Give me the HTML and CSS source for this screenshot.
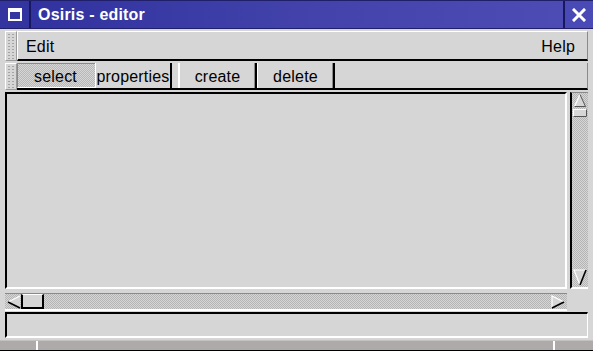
FILE: index.html
```html
<!DOCTYPE html>
<html>
<head>
<meta charset="utf-8">
<title>Osiris - editor</title>
<link rel="stylesheet" href="styles.css">
</head>
<body>
<div class="win">
  <div class="titlebar">
    <div class="tb-icon">
      <svg width="14" height="13" viewBox="0 0 14 13"><rect x="0" y="0" width="14" height="13" fill="#fff"/><rect x="2" y="4" width="10" height="7" fill="#3636a0"/></svg>
    </div>
    <div class="tb-title">Osiris - editor</div>
    <div class="tb-close">
      <svg width="14" height="14" viewBox="0 0 14 14"><path d="M2 2 L12 12 M12 2 L2 12" stroke="#fff" stroke-width="3" stroke-linecap="square"/></svg>
    </div>
  </div>

  <div class="barrow menurow">
    <div class="handle"></div>
    <div class="menubar">
      <span class="menu-item">Edit</span>
      <span class="spacer"></span>
      <span class="menu-item">Help</span>
    </div>
  </div>

  <div class="barrow toolrow">
    <div class="handle"></div>
    <div class="toolbar">
      <div class="tool btn-select">select</div>
      <div class="tool btn-props">properties</div>
      <div class="tool-gap"></div>
      <div class="tool btn-create">create</div>
      <div class="tool btn-delete">delete</div>
    </div>
  </div>

  <div class="scrollarea">
    <div class="canvas"></div>
    <div class="vscroll">
      <div class="arrow-up">
        <svg width="16" height="25" viewBox="0 0 16 25">
          <path d="M2 14 L8 1 L14 14 Z" fill="#d6d6d6"/>
          <path d="M2.5 13.5 L8 1.5" stroke="#fff" stroke-width="1.2" fill="none"/>
          <path d="M8 1.5 L13.5 13.5 L2.5 13.5" stroke="#555" stroke-width="1" fill="none"/>
          <rect x="1.5" y="16.5" width="13" height="7" fill="#d6d6d6" stroke="#fff" stroke-width="1"/>
          <path d="M14.5 16.5 L14.5 23.5 L1.5 23.5" stroke="#555" stroke-width="1" fill="none"/>
        </svg>
      </div>
      <div class="vtrack"></div>
      <div class="arrow-down">
        <svg width="16" height="17" viewBox="0 0 16 17">
          <path d="M2 1 L14 1 L8 16 Z" fill="#d6d6d6"/>
          <path d="M8 16 L2 1 L14 1" stroke="#fff" stroke-width="1.2" fill="none"/>
          <path d="M14 1 L8 16" stroke="#000" stroke-width="1.6" fill="none"/>
        </svg>
      </div>
    </div>
  </div>

  <div class="hscrollrow">
    <div class="hscroll">
      <div class="arrow-left">
        <svg width="14" height="14" viewBox="0 0 14 14">
          <path d="M1 7 L13 1 L13 13 Z" fill="#d6d6d6"/>
          <path d="M1 7 L13 1" stroke="#fff" stroke-width="1.2" fill="none"/>
          <path d="M1 7 L13 13" stroke="#000" stroke-width="1.6" fill="none"/>
        </svg>
      </div>
      <div class="hslider"></div>
      <div class="htrack"></div>
      <div class="arrow-right">
        <svg width="14" height="14" viewBox="0 0 14 14">
          <path d="M1 1 L13 7 L1 13 Z" fill="#d6d6d6"/>
          <path d="M1 13 L1 1 L13 7" stroke="#fff" stroke-width="1.2" fill="none"/>
          <path d="M13 7 L1 13" stroke="#000" stroke-width="1.6" fill="none"/>
        </svg>
      </div>
    </div>
  </div>

  <div class="statusrow">
    <div class="status"></div>
  </div>

  <div class="bottomstrip">
    <div class="seg seg-a"></div>
    <div class="seg seg-b"></div>
    <div class="seg seg-c"></div>
  </div>
</div>
</body>
</html>
```

FILE: styles.css
```css
* { box-sizing: border-box; }
html, body { margin: 0; padding: 0; }
body {
  width: 593px;
  height: 351px;
  overflow: hidden;
  background: #d6d6d6;
  font-family: "Liberation Sans", Arial, sans-serif;
  color: #000;
}
.win {
  display: flex;
  flex-direction: column;
  height: 351px;
}

/* title bar */
.titlebar {
  height: 29px;
  display: flex;
  background: #3a3aa2;
  border-top: 1px solid #20206a;
  border-bottom: 1px solid #20206a;
}
.tb-icon {
  width: 31px;
  border-right: 2px solid #18185c;
  background: #3434a0;
  display: flex;
  align-items: center;
  justify-content: center;
}
.tb-title {
  flex: 1;
  display: flex;
  align-items: center;
  padding-left: 7px;
  color: #fff;
  font-weight: bold;
  font-size: 16px;
  letter-spacing: 0.2px;
  background: linear-gradient(90deg, #3232a0 0%, #4242aa 50%, #4c4cb4 100%);
}
.tb-close {
  width: 30px;
  border-left: 2px solid #18185c;
  background: #4a4ab6;
  display: flex;
  align-items: center;
  justify-content: center;
}

/* bars */
.barrow {
  display: flex;
  margin: 2px 5px 0 5px;
}
.menurow { height: 30px; }
.toolrow { height: 27px; }
.handle {
  width: 12px;
  border: 1px solid;
  border-color: #fff #9a9a9a #9a9a9a #fff;
  background-color: #d6d6d6;
  background-image: radial-gradient(circle, #a4a4a4 0.8px, transparent 1px);
  background-size: 4px 3px;
  background-position: 1px 1px;
}
.menubar {
  flex: 1;
  display: flex;
  align-items: center;
  padding: 3px 12px 0 8px;
  border-top: 1px solid #fff;
  border-left: 1px solid #fff;
  border-right: 1px solid #8a8a8a;
  border-bottom: 2px solid #000;
  font-size: 16px;
  letter-spacing: 0.2px;
}
.spacer { flex: 1; }

.toolbar {
  flex: 1;
  display: flex;
  border-right: 1px solid #8a8a8a;
  border-bottom: 2px solid #000;
}
.tool {
  display: flex;
  align-items: center;
  justify-content: center;
  font-size: 16px;
  letter-spacing: 0.2px;
  padding-top: 2px;
}
.btn-select {
  width: 78px;
  border-top: 1px solid #8a8a8a;
  border-left: 1px solid #8a8a8a;
  border-bottom: 1px solid #fff;
  background-color: #d6d6d6;
  background-image: repeating-conic-gradient(#b8b8b8 0 25%, #d6d6d6 0 50%);
  background-size: 2px 2px;
  padding-right: 2px;
}
.btn-props {
  width: 77px;
  border-left: 1px solid #fff;
  border-right: 2px solid #000;
}
.tool-gap { width: 6px; }
.btn-create {
  width: 79px;
  border-left: 2px solid #fff;
  border-right: 2px solid #000;
  box-shadow: inset -1px 0 #8a8a8a;
}
.btn-delete {
  width: 78px;
  border-left: 1px solid #fff;
  border-right: 2px solid #000;
  box-shadow: inset -1px 0 #8a8a8a;
}

/* scrolled area */
.scrollarea {
  display: flex;
  height: 197px;
  margin: 2px 5px 0 5px;
}
.canvas {
  width: 562px;
  border-top: 2px solid #000;
  border-left: 2px solid #000;
  border-right: 2px solid #fff;
  border-bottom: 2px solid #fff;
  background: #d6d6d6;
}
.vscroll {
  width: 18px;
  margin-left: 3px;
  display: flex;
  flex-direction: column;
  border-left: 2px solid #000;
  border-top: 1px solid #8a8a8a;
  border-bottom: 2px solid #fff;
  background-color: #d6d6d6;
  background-image: repeating-conic-gradient(#b4b4b4 0 25%, #d6d6d6 0 50%);
  background-size: 2px 2px;
}
.arrow-up { height: 25px; display: flex; }
.vtrack { flex: 1; }
.arrow-down { height: 17px; display: flex; margin-bottom: 1px; }

.hscrollrow {
  display: flex;
  margin: 4px 5px 0 5px;
}
.hscroll {
  width: 562px;
  height: 18px;
  display: flex;
  border-top: 1px solid #8a8a8a;
  border-bottom: 2px solid #fff;
  background-color: #d6d6d6;
  background-image: repeating-conic-gradient(#b4b4b4 0 25%, #d6d6d6 0 50%);
  background-size: 2px 2px;
}
.arrow-left { width: 16px; display: flex; align-items: center; padding-left: 2px; }
.hslider {
  width: 23px;
  background: #d6d6d6;
  border-top: 1px solid #fff;
  border-left: 2px solid #000;
  border-right: 2px solid #000;
  border-bottom: 2px solid #000;
}
.htrack { flex: 1; }
.arrow-right { width: 16px; display: flex; align-items: center; }

.statusrow {
  display: flex;
  margin: 1px 5px 0 5px;
}
.status {
  width: 583px;
  height: 26px;
  border-top: 2px solid #000;
  border-left: 2px solid #000;
  border-right: 1px solid #fff;
  border-bottom: 2px solid #fff;
}

.bottomstrip {
  display: flex;
  height: 11px;
  margin-top: 2px;
  background: #aeaaaa;
  border-top: 1px solid #c4c0c0;
  border-bottom: 1px solid #000;
}
.seg-a { width: 38px; border-right: 2px solid #fff; }
.seg-b { width: 517px; border-right: 2px solid #fff; }
.seg-c { flex: 1; }
```
